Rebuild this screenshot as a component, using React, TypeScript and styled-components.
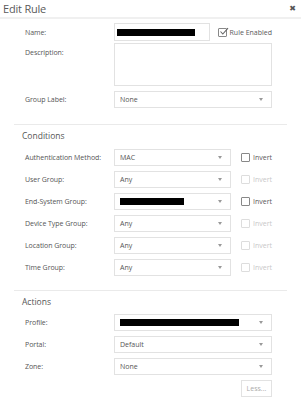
import React from 'react';
import styled, { createGlobalStyle } from 'styled-components';

const GlobalStyle = createGlobalStyle`
  html, body {
    margin: 0;
    padding: 0;
    background: #fff;
  }
  body {
    font-family: "Open Sans", "Liberation Sans", sans-serif;
    color: #555;
  }
`;

const Dialog = styled.div`
  width: 301px;
  height: 400px;
  background: #fff;
  overflow: hidden;
`;

const Header = styled.div`
  height: 17px;
  border-bottom: 2px solid #f0f0f0;
  display: flex;
  align-items: center;
  justify-content: space-between;
  padding: 0 5px 0 3px;
`;

const Title = styled.span`
  font-size: 11px;
  color: #5a5a5a;
  letter-spacing: -0.2px;
`;

const Close = styled.span`
  font-size: 8px;
  font-weight: bold;
  color: #555;
  font-family: "DejaVu Sans", sans-serif;
`;

const Section = styled.div<{ $divider?: boolean }>`
  margin: 0 14px;
  border-top: ${(p) => (p.$divider ? '1px solid #eaeaea' : 'none')};
`;

const SectionTitle = styled.div`
  font-size: 8.5px;
  color: #555;
  padding-left: 8px;
  height: 12px;
  line-height: 12px;
`;

const Row = styled.div<{ $top?: boolean }>`
  display: grid;
  grid-template-columns: 89px 158px;
  padding-left: 11px;
  align-items: ${(p) => (p.$top ? 'start' : 'center')};
`;

const Label = styled.div<{ $top?: boolean }>`
  font-size: 7px;
  color: #555;
  letter-spacing: -0.05px;
  padding-top: ${(p) => (p.$top ? '5px' : '0')};
`;

const Field = styled.div`
  display: flex;
  align-items: center;
`;

const TextBox = styled.div<{ $w?: number; $h?: number }>`
  width: ${(p) => p.$w ?? 158}px;
  height: ${(p) => p.$h ?? 18}px;
  box-sizing: border-box;
  border: 1px solid #e2e2e2;
  background: #fff;
  display: flex;
  align-items: center;
  padding-left: 2px;
`;

const Redacted = styled.div<{ $w: number }>`
  width: ${(p) => p.$w}px;
  height: 7px;
  background: #000;
`;

const Select = styled.div<{ $w?: number }>`
  width: ${(p) => p.$w ?? 158}px;
  height: 17px;
  box-sizing: border-box;
  border: 1px solid #e2e2e2;
  background: #fff;
  display: flex;
  align-items: center;
  justify-content: space-between;
  padding: 0 8px 0 5px;
  font-size: 7px;
  color: #555;
`;

const Caret = styled.span`
  width: 0;
  height: 0;
  border-left: 2.5px solid transparent;
  border-right: 2.5px solid transparent;
  border-top: 3px solid #999;
`;

const Check = styled.label<{ $disabled?: boolean }>`
  display: flex;
  align-items: center;
  gap: 3px;
  font-size: 7px;
  color: ${(p) => (p.$disabled ? '#c8c8c8' : '#5a5a5a')};
  white-space: nowrap;
`;

const Box = styled.span<{ $disabled?: boolean }>`
  width: 9px;
  height: 9px;
  box-sizing: border-box;
  border: 1px solid ${(p) => (p.$disabled ? '#ddd' : '#888')};
  border-radius: 1px;
  display: inline-flex;
  position: relative;
`;

const Tick = styled.svg`
  position: absolute;
  left: 0px;
  top: -2px;
`;

const Spacer = styled.div<{ $w: number }>`
  width: ${(p) => p.$w}px;
  flex-shrink: 0;
`;

const Gap = styled.div<{ $h: number }>`
  height: ${(p) => p.$h}px;
`;

const Footer = styled.div`
  display: flex;
  justify-content: flex-end;
  padding-right: 29px;
`;

const LessButton = styled.div`
  width: 31px;
  height: 17px;
  box-sizing: border-box;
  border: 1px solid #e2e2e2;
  display: flex;
  align-items: center;
  justify-content: center;
  font-size: 7px;
  color: #aaa;
`;

const Checkbox: React.FC<{ label: string; checked?: boolean; disabled?: boolean }> = ({
  label,
  checked,
  disabled,
}) => (
  <Check $disabled={disabled}>
    <Box $disabled={disabled}>
      {checked && (
        <Tick width="10" height="9" viewBox="0 0 10 9">
          <path d="M1.5 4.5 L3.8 7 L9 1.2" fill="none" stroke="#666" strokeWidth="1.1" />
        </Tick>
      )}
    </Box>
    {label}
  </Check>
);

const conditions = [
  { label: 'Authentication Method:', value: 'MAC', invert: true },
  { label: 'User Group:', value: 'Any', invert: false },
  { label: 'End-System Group:', value: '', redact: 64, invert: true },
  { label: 'Device Type Group:', value: 'Any', invert: false },
  { label: 'Location Group:', value: 'Any', invert: false },
  { label: 'Time Group:', value: 'Any', invert: false },
];

const actions = [
  { label: 'Profile:', value: '', redact: 119 },
  { label: 'Portal:', value: 'Default' },
  { label: 'Zone:', value: 'None' },
];

export default function App() {
  return (
    <Dialog>
      <GlobalStyle />
      <Header>
        <Title>Edit Rule</Title>
        <Close>✖</Close>
      </Header>

      <Gap $h={4} />
      <Section>
        <Row>
          <Label>Name:</Label>
          <Field>
            <TextBox $w={97}>
              <Redacted $w={78} />
            </TextBox>
            <Spacer $w={8} />
            <Checkbox label="Rule Enabled" checked />
          </Field>
        </Row>
        <Gap $h={2} />
        <Row $top>
          <Label $top>Description:</Label>
          <TextBox $h={43} />
        </Row>
        <Gap $h={5} />
        <Row>
          <Label>Group Label:</Label>
          <Select>
            None
            <Caret />
          </Select>
        </Row>
      </Section>

      <Gap $h={16} />
      <Section $divider>
        <Gap $h={5} />
        <SectionTitle>Conditions</SectionTitle>
        <Gap $h={7} />
        {conditions.map((c) => (
          <React.Fragment key={c.label}>
            <Row>
              <Label>{c.label}</Label>
              <Field>
                <Select $w={119}>
                  {c.redact ? <Redacted $w={c.redact} /> : c.value}
                  <Caret />
                </Select>
                <Spacer $w={10} />
                <Checkbox label="Invert" disabled={!c.invert} />
              </Field>
            </Row>
            <Gap $h={5} />
          </React.Fragment>
        ))}
      </Section>

      <Gap $h={9} />
      <Section $divider>
        <Gap $h={5} />
        <SectionTitle>Actions</SectionTitle>
        <Gap $h={6} />
        {actions.map((a) => (
          <React.Fragment key={a.label}>
            <Row>
              <Label>{a.label}</Label>
              <Select>
                {a.redact ? <Redacted $w={a.redact} /> : a.value}
                <Caret />
              </Select>
            </Row>
            <Gap $h={5} />
          </React.Fragment>
        ))}
      </Section>
      <Footer>
        <LessButton>Less...</LessButton>
      </Footer>
    </Dialog>
  );
}
